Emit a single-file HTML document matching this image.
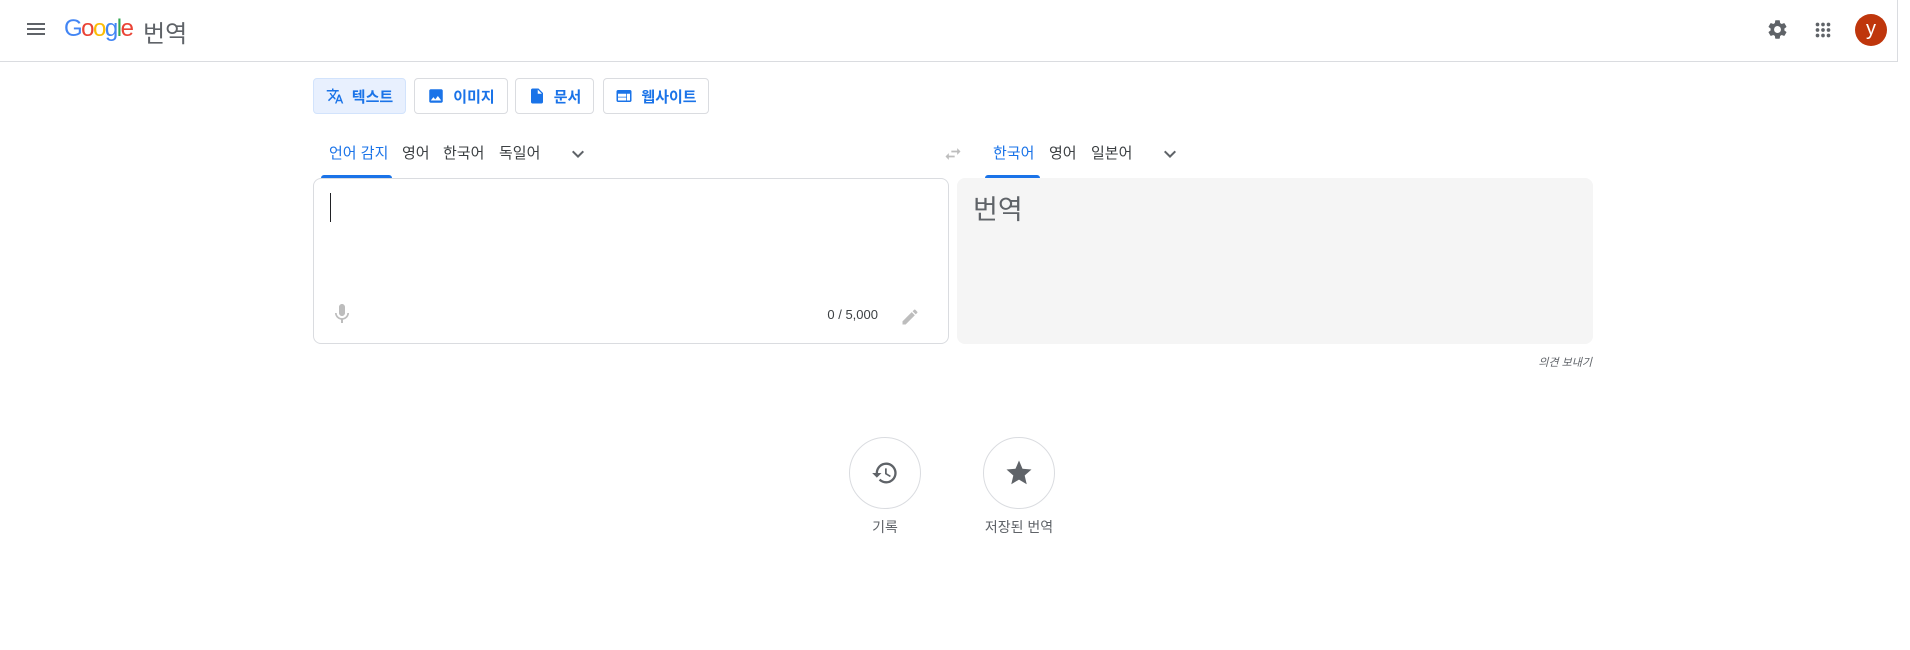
<!DOCTYPE html>
<html><head><meta charset="utf-8"><style>
*{box-sizing:border-box;margin:0;padding:0}
body{width:1910px;height:650px;background:#fff;font-family:"Liberation Sans","Noto Sans CJK KR",sans-serif;position:relative;overflow:hidden;color:#3c4043}
.a{position:absolute}
.hdr{left:0;top:0;width:1898px;height:62px;border-bottom:1px solid #dadce0}
.btn{top:78px;height:36px;border:1px solid #dadce0;border-radius:4px;display:flex;align-items:center;justify-content:center;gap:8px;font-size:15px;color:#1a73e8;font-weight:600}
.lt{top:142px;font-size:15px;color:#3c4043}
.blue{color:#1a73e8}
.ul{height:3px;background:#1a73e8;top:175px;border-radius:3px 3px 0 0}
</style></head><body>
<div class="a hdr"></div>
<div class="a" style="left:1897px;top:0;width:1px;height:62px;background:#dadce0"></div>
<svg class="a" style="left:24px;top:17px" width="24" height="24" viewBox="0 0 24 24"><path d="M3 18h18v-2H3zm0-5h18v-2H3zm0-7v2h18V6z" fill="#5f6368"/></svg>
<div class="a" style="left:64px;top:15px;font-size:24px;letter-spacing:-1.5px;font-family:'Liberation Sans',sans-serif"><span style="color:#4285f4">G</span><span style="color:#ea4335">o</span><span style="color:#fbbc05">o</span><span style="color:#4285f4">g</span><span style="color:#34a853">l</span><span style="color:#ea4335">e</span></div>
<div class="a" style="left:143px;top:14px;font-size:24px;color:#5f6368">번역</div>
<svg class="a" style="left:1766px;top:18px" width="23" height="23" viewBox="0 0 24 24"><path fill="#5f6368" d="M19.14 12.94c.04-.3.06-.61.06-.94 0-.32-.02-.64-.07-.94l2.030-1.58a.49.49 0 0 0 .12-.61l-1.92-3.32a.49.49 0 0 0-.59-.22l-2.39.96c-.5-.38-1.03-.7-1.62-.94l-.36-2.54a.48.48 0 0 0-.48-.41h-3.84c-.24 0-.43.17-.47.41l-.36 2.54c-.59.24-1.13.57-1.62.94l-2.39-.96c-.22-.08-.47 0-.59.22L2.74 8.87c-.12.21-.08.47.12.61l2.03 1.58c-.05.3-.09.63-.09.94s.02.64.07.94l-2.03 1.58a.49.49 0 0 0-.12.61l1.92 3.32c.12.22.37.29.59.22l2.39-.96c.5.38 1.03.7 1.62.94l.36 2.54c.05.24.24.41.48.41h3.84c.24 0 .44-.17.47-.41l.36-2.54c.59-.24 1.13-.56 1.62-.94l2.39.96c.22.08.47 0 .59-.22l1.920-3.32c.12-.22.07-.47-.12-.61zM12 15.6A3.6 3.6 0 1 1 12 8.4a3.6 3.6 0 0 1 0 7.2z"/></svg>
<svg class="a" style="left:1812px;top:19px" width="22" height="22" viewBox="0 0 24 24"><g fill="#5f6368"><circle cx="6" cy="6" r="2"/><circle cx="12" cy="6" r="2"/><circle cx="18" cy="6" r="2"/><circle cx="6" cy="12" r="2"/><circle cx="12" cy="12" r="2"/><circle cx="18" cy="12" r="2"/><circle cx="6" cy="18" r="2"/><circle cx="12" cy="18" r="2"/><circle cx="18" cy="18" r="2"/></g></svg>
<div class="a" style="left:1855px;top:14px;width:32px;height:32px;border-radius:50%;background:#bf360c;color:#fff;font-size:20px;text-align:center;line-height:30px">y</div>

<div class="a btn" style="left:313px;width:93px;background:#e8f0fe;border-color:#d2e3fc">
<svg width="18" height="18" viewBox="0 0 24 24"><path fill="#1a73e8" d="M12.87 15.07l-2.54-2.51.03-.03A17.52 17.52 0 0 0 14.07 6H17V4h-7V2H8v2H1v2h11.17C11.5 7.92 10.44 9.75 9 11.35 8.07 10.32 7.3 9.19 6.69 8h-2c.73 1.63 1.73 3.17 2.98 4.56l-5.09 5.02L4 19l5-5 3.11 3.11.76-2.04zM18.5 10h-2L12 22h2l1.12-3h4.75L21 22h2l-4.5-12zm-2.620 7l1.62-4.33L19.12 17h-3.24z"/></svg>텍스트</div>
<div class="a btn" style="left:414px;width:94px">
<svg width="18" height="18" viewBox="0 0 24 24"><path fill="#1a73e8" d="M21 19V5c0-1.1-.9-2-2-2H5c-1.1 0-2 .9-2 2v14c0 1.1.9 2 2 2h14c1.1 0 2-.9 2-2zM8.5 13.5l2.5 3.01L14.5 12l4.5 6H5l3.5-4.5z"/></svg>이미지</div>
<div class="a btn" style="left:515px;width:79px">
<svg width="18" height="18" viewBox="0 0 24 24"><path fill="#1a73e8" d="M14 2H6c-1.1 0-2 .9-2 2v16c0 1.1.9 2 2 2h12c1.1 0 2-.9 2-2V8l-6-6zm-1 7V3.5L18.5 9H13z"/></svg>문서</div>
<div class="a btn" style="left:603px;width:106px">
<svg width="18" height="18" viewBox="0 0 24 24"><path fill="#1a73e8" d="M20 4H4c-1.1 0-2 .9-2 2v12c0 1.1.9 2 2 2h16c1.1 0 2-.9 2-2V6c0-1.1-.9-2-2-2zm-5 14H4v-4h11v4zm0-5H4V9h11v4zm5 5h-4V9h4v9z"/></svg>웹사이트</div>

<div class="a lt blue" style="left:329px">언어 감지</div>
<div class="a ul" style="left:321px;width:71px"></div>
<div class="a lt" style="left:402px">영어</div>
<div class="a lt" style="left:443px">한국어</div>
<div class="a lt" style="left:499px">독일어</div>
<svg class="a" style="left:566px;top:142px" width="24" height="24" viewBox="0 0 24 24"><path fill="#5f6368" d="M7.41 8.59L12 13.17l4.59-4.58L18 10l-6 6-6-6z"/></svg>
<svg class="a" style="left:943px;top:144px" width="20" height="20" viewBox="0 0 24 24"><path fill="#bdbdbd" d="M6.99 11L3 15l3.99 4v-3H14v-2H6.99v-3zM21 9l-3.99-4v3H10v2h7.010v3L21 9z"/></svg>
<div class="a lt blue" style="left:993px">한국어</div>
<div class="a ul" style="left:985px;width:55px"></div>
<div class="a lt" style="left:1049px">영어</div>
<div class="a lt" style="left:1091px">일본어</div>
<svg class="a" style="left:1158px;top:142px" width="24" height="24" viewBox="0 0 24 24"><path fill="#5f6368" d="M7.41 8.59L12 13.17l4.59-4.58L18 10l-6 6-6-6z"/></svg>

<div class="a" style="left:313px;top:178px;width:636px;height:166px;border:1px solid #dadce0;border-radius:8px"></div>
<div class="a" style="left:330px;top:193px;width:1px;height:29px;background:#202124"></div>
<svg class="a" style="left:330px;top:302px" width="24" height="24" viewBox="0 0 24 24"><path fill="#bdbdbd" d="M12 14c1.66 0 3-1.34 3-3V5c0-1.66-1.34-3-3-3S9 3.34 9 5v6c0 1.66 1.34 3 3 3zm5.3-3c0 3-2.54 5.1-5.3 5.1S6.7 14 6.7 11H5c0 3.41 2.72 6.23 6 6.72V21h2v-3.28c3.28-.48 6-3.3 6-6.72h-1.7z"/></svg>
<div class="a" style="left:790px;top:307px;width:88px;text-align:right;font-size:13px;color:#3c4043">0 / 5,000</div>
<svg class="a" style="left:900px;top:307px" width="20" height="20" viewBox="0 0 24 24"><path fill="#bdbdbd" d="M3 17.25V21h3.75L17.81 9.94l-3.75-3.75L3 17.25zM20.71 7.04a1 1 0 0 0 0-1.41l-2.34-2.34a1 1 0 0 0-1.41 0l-1.83 1.83 3.75 3.75 1.83-1.83z"/></svg>

<div class="a" style="left:957px;top:178px;width:636px;height:166px;background:#f5f5f5;border-radius:8px"></div>
<div class="a" style="left:973px;top:188px;font-size:27px;color:#5f6368">번역</div>
<div class="a" style="left:1492px;top:354px;width:100px;text-align:right;font-size:11px;font-style:italic;color:#5f6368">의견 보내기</div>

<div class="a" style="left:849px;top:437px;width:72px;height:72px;border:1px solid #dadce0;border-radius:50%"></div>
<svg class="a" style="left:871px;top:459px" width="28" height="28" viewBox="0 0 24 24"><path fill="#5f6368" d="M13 3a9 9 0 0 0-9 9H1l3.89 3.89.07.14L9 12H6c0-3.87 3.13-7 7-7s7 3.13 7 7-3.13 7-7 7c-1.93 0-3.68-.79-4.94-2.06l-1.42 1.42A8.954 8.954 0 0 0 13 21a9 9 0 0 0 0-18zm-1 5v5l4.28 2.54.72-1.21-3.5-2.08V8H12z"/></svg>
<div class="a" style="left:835px;top:517px;width:100px;text-align:center;font-size:14px;color:#5f6368">기록</div>
<div class="a" style="left:983px;top:437px;width:72px;height:72px;border:1px solid #dadce0;border-radius:50%"></div>
<svg class="a" style="left:1004px;top:458px" width="30" height="30" viewBox="0 0 24 24"><path fill="#5f6368" d="M12 17.27L18.18 21l-1.64-7.03L22 9.24l-7.19-.61L12 2 9.19 8.63 2 9.24l5.46 4.73L5.82 21z"/></svg>
<div class="a" style="left:959px;top:517px;width:120px;text-align:center;font-size:14px;color:#5f6368">저장된 번역</div>
</body></html>
